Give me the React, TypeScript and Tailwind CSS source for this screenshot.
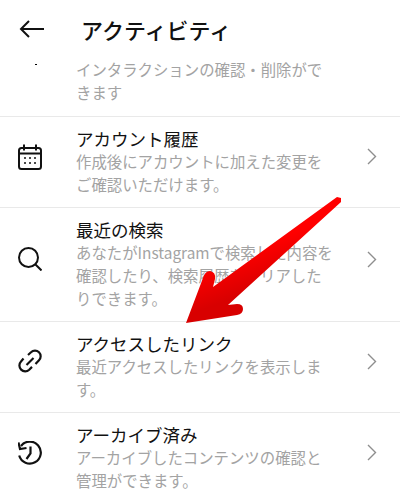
const FONT = "font-['Noto_Sans_CJK_JP','Noto_Sans',sans-serif]";

function CalendarIcon() {
  return (
    <svg width="24" height="26" viewBox="0 0 24 26" fill="none" stroke="#111" strokeWidth="2">
      <rect x="1" y="4" width="22" height="21" rx="2.5" />
      <path d="M1 9.5h22M6 0.5v6M18 0.5v6" />
      <g fill="#111" stroke="none">
        <circle cx="7" cy="14" r="1" />
        <circle cx="12" cy="14" r="1" />
        <circle cx="17" cy="14" r="1" />
        <circle cx="7" cy="19" r="1" />
        <circle cx="12" cy="19" r="1" />
        <circle cx="17" cy="19" r="1" />
      </g>
    </svg>
  );
}

function SearchIcon() {
  return (
    <svg width="24" height="24" viewBox="0 0 24 24" fill="none" stroke="#111" strokeWidth="2">
      <circle cx="10.5" cy="10.5" r="9.5" />
      <path d="M17.5 17.5l6 6" />
    </svg>
  );
}

function LinkIcon() {
  return (
    <svg width="24" height="25" viewBox="0 0 24 25" fill="none" stroke="#111" strokeWidth="2.2">
      <path d="M10 6l3-2.700a5.600 5.600 0 0 1 8 8l-3.500 3.700" />
      <path d="M5.500 9.500L3 12.500a5.800 5.800 0 0 0 8.200 8.200l2.800-2.800" />
      <path d="M8.500 16l7-7" />
    </svg>
  );
}

function HistoryIcon() {
  return (
    <svg width="24" height="24" viewBox="0 0 24 24" fill="none" stroke="#111" strokeWidth="2.2">
      <path d="M3 5a11 11 0 1 1-1.800 9.500" />
      <path d="M0.500 1.500l1.500 6.500 6.500-1" />
      <path d="M12.500 5.500v7l-4 5.500" />
    </svg>
  );
}

function Chevron() {
  return (
    <svg width="10" height="17" viewBox="0 0 10 17" fill="none" stroke="#8e8e8e" strokeWidth="1.4">
      <path d="M1 1l7.500 7.500L1 16" />
    </svg>
  );
}

function Row({ icon, title, desc }: { icon: React.ReactNode; title: string; desc: string[] }) {
  return (
    <div className="flex items-center border-t border-[#e9e9e9] pt-[11px] pb-[11px]">
      <div className="w-[76px] shrink-0 pl-[18px] mb-[11px] flex">{icon}</div>
      <div className="flex-1">
        <div className="text-[17.5px] leading-[22px] text-[#111]">{title}</div>
        {desc.map(line => (
          <div key={line} className="text-[15.4px] leading-[23px] text-[#a3a3a3] whitespace-nowrap">{line}</div>
        ))}
      </div>
      <div className="w-[33px] shrink-0 mb-[11px] flex"><Chevron /></div>
    </div>
  );
}

export default function App() {
  return (
    <div className={`relative w-[400px] h-[494px] overflow-hidden bg-white ${FONT}`}>
      <div className="h-[58px] flex items-center pb-[1px]">
        <div className="w-[81px] pl-[19px] flex">
          <svg width="25" height="18" viewBox="0 0 25 18" fill="none" stroke="#111" strokeWidth="2">
            <path d="M25 9H2M10 1L2 9l8 8" />
          </svg>
        </div>
        <h1 className="text-[22px] leading-[28px] font-medium text-[#111]">アクティビティ</h1>
      </div>

      <div className="flex pb-[12px]">
        <div className="w-[76px] pl-[35px]">
          <div className="w-[2px] h-[1px] mt-[6px] bg-black" />
        </div>
        <div className="text-[15.4px] leading-[23px] text-[#a3a3a3]">
          <div>インタラクションの確認・削除がで</div>
          <div>きます</div>
        </div>
      </div>

      <Row icon={<CalendarIcon />} title="アカウント履歴" desc={['作成後にアカウントに加えた変更を', 'ご確認いただけます。']} />
      <Row icon={<SearchIcon />} title="最近の検索" desc={['あなたがInstagramで検索した内容を', '確認したり、検索履歴をクリアした', 'りできます。']} />
      <Row icon={<LinkIcon />} title="アクセスしたリンク" desc={['最近アクセスしたリンクを表示しま', 'す。']} />
      <Row icon={<HistoryIcon />} title="アーカイブ済み" desc={['アーカイブしたコンテンツの確認と', '管理ができます。']} />

      {/* red annotation arrow over the list */}
      <svg className="absolute left-0 top-0" width="400" height="494" viewBox="0 0 400 494">
        <defs>
          <linearGradient id="arrowRed" x1="0.55" y1="0.35" x2="0.68" y2="0.62">
            <stop offset="0" stopColor="#ff0000" />
            <stop offset="1" stopColor="#d80000" />
          </linearGradient>
        </defs>
        <path
          d="M337 197L341 198L341 202L228 305L237 304Q243 304 243 309Q243 314 237 315L186 323L203 278Q205 271 210 271Q216 272 215 279L213 287Z"
          fill="url(#arrowRed)"
        />
      </svg>
    </div>
  );
}
